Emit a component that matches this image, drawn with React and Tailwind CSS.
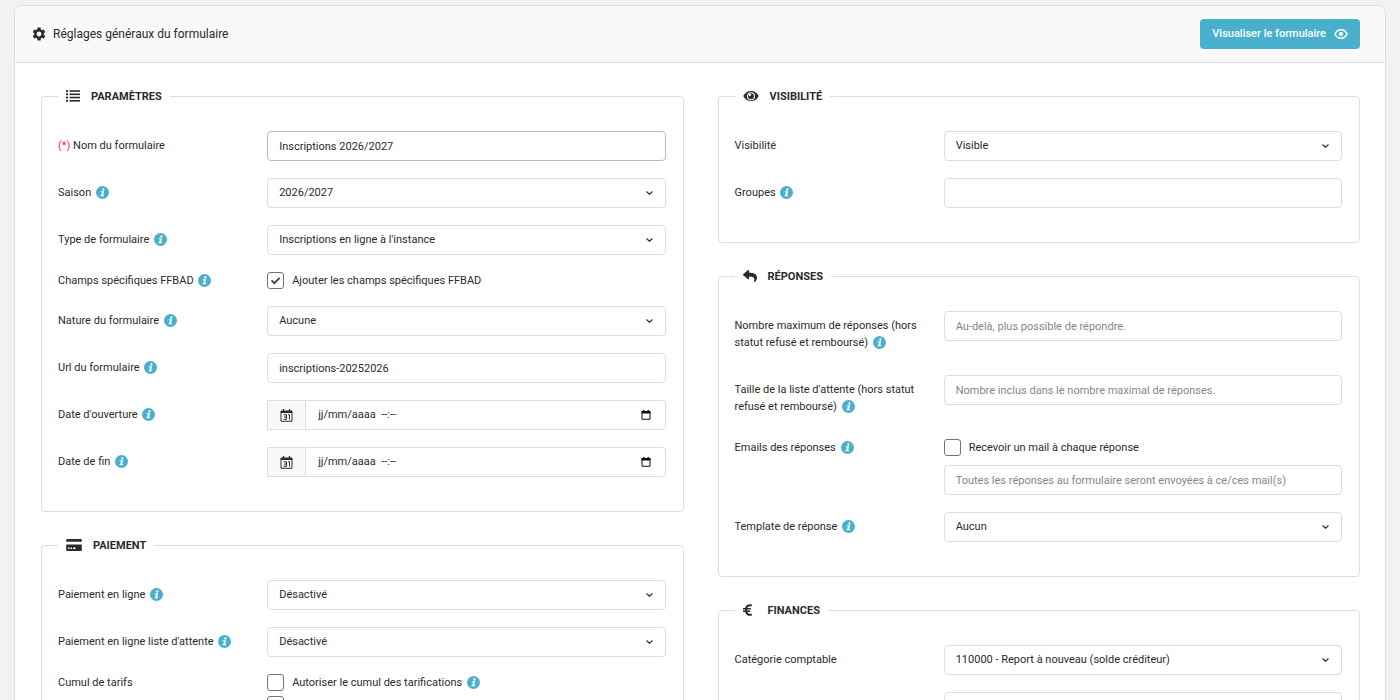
import React, { useId } from "react";
import { MdSettings } from "react-icons/md";
import { FaReply } from "react-icons/fa";

const FIELD =
  "block h-[30px] w-full rounded border bg-white px-[11px] text-[11px] leading-4 text-[#2b2b2b] placeholder:text-[#868686] outline-none focus:border-[#999999]";
const CONTROL = FIELD + " border-[#dddddd]";
const CONTROL_STRONG = FIELD + " border-[#bbbbbb]";

function InfoIcon() {
  return (
    <svg viewBox="0 0 26 26" className="ml-[2px] inline-block h-[13px] w-[13px] align-[-3px]" role="img" aria-label="Aide">
      <circle cx="13" cy="13" r="13" fill="#48b0cc" />
      <circle cx="14.8" cy="7" r="2.3" fill="#fff" />
      <path d="M9.600 10.400h6.700l-2 7.700h2l-.5 2.200H8.900l.5-2.200h1.200l1.400-5.500H9.100z" fill="#fff" />
    </svg>
  );
}

function ListIcon() {
  return (
    <svg viewBox="0 0 28 24" className="h-3 w-[14px]" fill="currentColor" aria-hidden="true">
      <rect x="0" y="0" width="4" height="4" rx="1" />
      <rect x="0" y="6.500" width="4" height="4" rx="1" />
      <rect x="0" y="13" width="4" height="4" rx="1" />
      <rect x="0" y="19.500" width="4" height="4" rx="1" />
      <rect x="7" y="0.500" width="21" height="3.200" />
      <rect x="7" y="7" width="21" height="3.200" />
      <rect x="7" y="13.500" width="21" height="3.200" />
      <rect x="7" y="20" width="21" height="3.200" />
    </svg>
  );
}

function CardIcon() {
  return (
    <svg viewBox="0 0 32 24" className="h-3 w-4" fill="currentColor" aria-hidden="true">
      <path d="M2 0h28a1.6 1.6 0 0 1 1.6 1.6V5.500H.4V1.6A1.6 1.6 0 0 1 2 0z" />
      <path fillRule="evenodd" d="M.4 11h31.2v11.4A1.6 1.6 0 0 1 30 24H2a1.6 1.6 0 0 1-1.6-1.6zM4 17v3h3v-3zm5 0v3h3v-3zm5 0v3h5v-3z" />
    </svg>
  );
}

function EyeIcon() {
  return (
    <svg viewBox="0 0 32 24" className="h-3 w-4" aria-hidden="true">
      <path d="M16 2C9 2 3.200 6 .5 12 3.200 18 9 22 16 22s12.800-4 15.500-10C28.800 6 23 2 16 2z" fill="currentColor" />
      <path fill="#fff" fillRule="evenodd" d="M16 4.400a8 8 0 1 0 0 16 8 8 0 0 0 0-16zm0 2.100a5.900 5.900 0 1 1 0 11.800 5.900 5.900 0 0 1 0-11.800z" />
      <circle cx="13.800" cy="9.800" r="2.500" fill="#fff" />
    </svg>
  );
}

function PreviewIcon() {
  return (
    <svg viewBox="0 0 28 24" className="h-3 w-[14px]" aria-hidden="true">
      <path d="M14 3.500C8.500 3.500 4.200 7 2 12c2.200 5 6.500 8.500 12 8.500S23.800 17 26 12C23.800 7 19.500 3.500 14 3.500z" fill="none" stroke="currentColor" strokeWidth="3.200" strokeLinejoin="round" />
      <circle cx="14" cy="12" r="4.200" fill="currentColor" />
    </svg>
  );
}

function EuroIcon() {
  return (
    <svg viewBox="0 0 20 24" className="h-3 w-[10px]" fill="none" stroke="currentColor" aria-hidden="true">
      <path d="M17.500 3.200C10.500.8 6 4 6 12s4.500 11.200 11.500 8.800" strokeWidth="4.200" />
      <path d="M0 9.600h15.500M0 14.400h14.500" strokeWidth="3" />
    </svg>
  );
}

function CalendarIcon() {
  return (
    <svg viewBox="0 0 26 26" className="h-[13px] w-[13px]" fill="none" stroke="#2b2b2b" aria-hidden="true">
      <path d="M2 4h22v20.500H2z" strokeWidth="2" />
      <path d="M2 6h22" strokeWidth="4" />
      <path d="M7 0v5M19 0v5" strokeWidth="2.600" />
      <path d="M7 11.500h6v9H7M8 16h5M16 11.500h3v9.500" strokeWidth="2" />
    </svg>
  );
}

function PickerIcon() {
  return (
    <svg viewBox="0 0 20 20" className="h-[10px] w-[10px]" aria-hidden="true">
      <path d="M2 3h16v15.500H2z" fill="none" stroke="#111" strokeWidth="2" />
      <path d="M1 2h18v5H1zM4 0h3v3H4zM13 0h3v3h-3z" fill="#111" />
    </svg>
  );
}

function Section({ icon, title, children }) {
  return (
    <fieldset className="min-w-0 rounded border border-[#dddddd] px-2 pt-[27px] pb-[34px]">
      <legend className="ml-2 px-2">
        <span className="flex h-4 items-center text-[11px] leading-4 font-bold text-[#2b2b2b] uppercase">
          <span className="mr-[11px] flex min-w-[14px] items-center">{icon}</span>
          <span className="pt-0.5">{title}</span>
        </span>
      </legend>
      <div className="flex flex-col gap-[17px]">{children}</div>
    </fieldset>
  );
}

function Row({ id, label, required, info, flat, children }) {
  return (
    <div className="grid grid-cols-3">
      <label htmlFor={id} className={flat ? "px-2 leading-[17px]" : "px-2 pt-[6px] pb-[7px] leading-[17px]"}>
        {required && <span className="text-[#e53935]">(*) </span>}
        {label}
        {info && " "}
        {info && <InfoIcon />}
      </label>
      <div className="col-span-2 px-[9px]">{children}</div>
    </div>
  );
}

function TextRow({ value, placeholder, strong, ...row }) {
  const id = useId();
  return (
    <Row id={id} {...row}>
      <input
        id={id}
        type="text"
        defaultValue={value}
        placeholder={placeholder}
        className={strong ? CONTROL_STRONG : CONTROL}
      />
    </Row>
  );
}

function SelectRow({ value, ...row }) {
  const id = useId();
  return (
    <Row id={id} {...row}>
      <div className="relative">
        <select id={id} className={CONTROL + " appearance-none"}>
          <option>{value}</option>
        </select>
        <svg viewBox="0 0 14 8" className="pointer-events-none absolute top-[13px] right-[13px] h-1 w-[7px]" fill="none" stroke="#333" strokeWidth="2.400" aria-hidden="true">
          <path d="M1 1l6 5.500L13 1" />
        </svg>
      </div>
    </Row>
  );
}

function DateRow(row) {
  const id = useId();
  return (
    <Row id={id} {...row}>
      <div className="flex h-[30px]">
        <span className="flex w-[38px] shrink-0 items-center justify-center border border-r-0 border-[#dddddd] bg-[#f9f9f9]">
          <CalendarIcon />
        </span>
        <div className="flex min-w-0 flex-1 items-center rounded-r border border-[#dddddd] bg-white pr-[14px] pl-3">
          <input id={id} type="text" defaultValue={"jj/mm/aaaa\u00a0\u00a0--:--"} className="min-w-0 flex-1 bg-transparent text-[11px] outline-none" />
          <button type="button" aria-label="Ouvrir le calendrier">
            <PickerIcon />
          </button>
        </div>
      </div>
    </Row>
  );
}

function Check({ id, label, checked, info }) {
  return (
    <div className="flex h-[17px] items-center">
      <span className="relative flex">
        <input
          id={id}
          type="checkbox"
          defaultChecked={checked}
          className="peer h-[17px] w-[17px] appearance-none rounded-[3px] border border-[#6b7780] bg-white"
        />
        <svg viewBox="0 0 17 17" className="pointer-events-none absolute inset-0 hidden h-[17px] w-[17px] peer-checked:block" fill="none" stroke="#37444d" strokeWidth="1.800" aria-hidden="true">
          <path d="M4.500 8.300l2.900 2.900 5.200-5.400" />
        </svg>
      </span>
      <label htmlFor={id} className="pl-2 leading-[17px]">
        {label}
        {info && " "}
        {info && <InfoIcon />}
      </label>
    </div>
  );
}

export default function App() {
  return (
    <div className="min-h-screen bg-[#f2f2f2] px-[14px] pt-[5px] pb-5 font-['Roboto','Liberation_Sans',sans-serif] text-[11px] text-[#2b2b2b]">
      <main className="rounded-lg border border-[#dddddd] bg-white">
        <header className="flex h-[57px] items-center justify-between rounded-t-lg border-b border-[#dddddd] bg-[#f9f9f9] pr-[25px] pl-4">
          <h1 className="flex items-center gap-[6px] text-[12px] leading-4">
            <MdSettings className="h-4 w-4" aria-hidden="true" />
            Réglages généraux du formulaire
          </h1>
          <button type="button" className="flex h-[30px] items-center gap-2 rounded bg-[#48b0cc] px-3 text-[11px] font-medium text-white">
            Visualiser le formulaire
            <PreviewIcon />
          </button>
        </header>
        <div className="grid grid-cols-2 items-start gap-[34px] py-[25px] pr-[25px] pl-[26px]">
          <div className="flex min-w-0 flex-col gap-[25px]">
            <Section icon={<ListIcon />} title="Paramètres">
              <TextRow label="Nom du formulaire" required strong value="Inscriptions 2026/2027" />
              <SelectRow label="Saison" info value="2026/2027" />
              <SelectRow label="Type de formulaire" info value="Inscriptions en ligne à l'instance" />
              <Row id="ffbad" label="Champs spécifiques FFBAD" info flat>
                <Check id="ffbad" label="Ajouter les champs spécifiques FFBAD" checked />
              </Row>
              <SelectRow label="Nature du formulaire" info value="Aucune" />
              <TextRow label="Url du formulaire" info value="inscriptions-20252026" />
              <DateRow label="Date d'ouverture" info />
              <DateRow label="Date de fin" info />
            </Section>
            <Section icon={<CardIcon />} title="Paiement">
              <SelectRow label="Paiement en ligne" info value="Désactivé" />
              <SelectRow label="Paiement en ligne liste d'attente" info value="Désactivé" />
              <Row id="cumul" label="Cumul de tarifs" flat>
                <div className="flex flex-col gap-[5px]">
                  <Check id="cumul" label="Autoriser le cumul des tarifications" info />
                  <Check id="cumul-reductions" label="Autoriser le cumul des réductions" />
                </div>
              </Row>
            </Section>
          </div>
          <div className="flex min-w-0 flex-col gap-[25px]">
            <Section icon={<EyeIcon />} title="Visibilité">
              <SelectRow label="Visibilité" value="Visible" />
              <TextRow label="Groupes" info />
            </Section>
            <Section icon={<FaReply className="h-[14px] w-[14px]" aria-hidden="true" />} title="Réponses">
              <TextRow label="Nombre maximum de réponses (hors statut refusé et remboursé)" info placeholder="Au-delà, plus possible de répondre." />
              <TextRow label="Taille de la liste d'attente (hors statut refusé et remboursé)" info placeholder="Nombre inclus dans le nombre maximal de réponses." />
              <Row id="emails" label="Emails des réponses" info flat>
                <div className="flex flex-col gap-[9px]">
                  <Check id="emails" label="Recevoir un mail à chaque réponse" />
                  <input type="text" aria-label="Adresses mail des réponses" placeholder="Toutes les réponses au formulaire seront envoyées à ce/ces mail(s)" className={CONTROL} />
                </div>
              </Row>
              <SelectRow label="Template de réponse" info value="Aucun" />
            </Section>
            <Section icon={<EuroIcon />} title="Finances">
              <SelectRow label="Catégorie comptable" value="110000 - Report à nouveau (solde créditeur)" />
              <SelectRow label="Code analytique" value="" />
            </Section>
          </div>
        </div>
      </main>
    </div>
  );
}
